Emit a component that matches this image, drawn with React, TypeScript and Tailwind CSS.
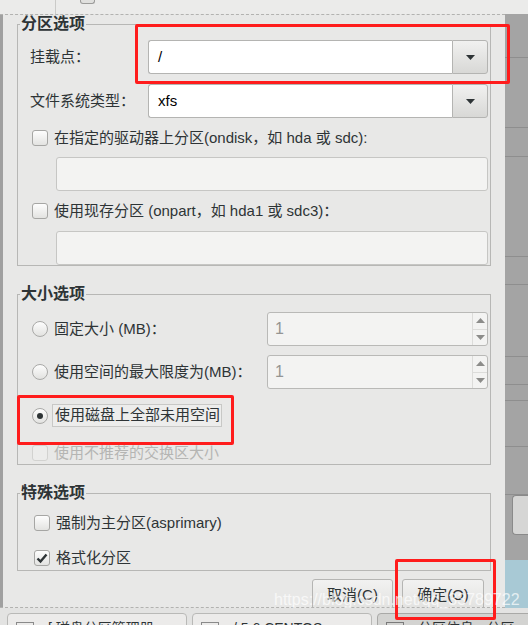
import React from 'react';

const Check = ({ checked = false, disabled = false }: { checked?: boolean; disabled?: boolean }) => (
  <div
    className={
      disabled
        ? 'flex h-[16px] w-[16px] shrink-0 items-center justify-center rounded-[3px] border border-[#d2d2d0] bg-[#ececeb]'
        : 'flex h-[16px] w-[16px] shrink-0 items-center justify-center rounded-[3px] border border-[#a6a6a4] bg-linear-to-b from-[#fdfdfd] to-[#e3e3e1]'
    }
  >
    {checked && (
      <svg width="14" height="14" viewBox="0 0 14 14">
        <path d="M2.5 7.5 L5.5 10.5 L11.5 3.5" fill="none" stroke="#2e3436" strokeWidth="2.4" />
      </svg>
    )}
  </div>
);

const Radio = ({ checked = false }: { checked?: boolean }) => (
  <div className="flex h-[16px] w-[16px] shrink-0 items-center justify-center rounded-full border border-[#a9a9a7] bg-linear-to-b from-[#fdfdfd] to-[#e2e2e0]">
    {checked && <div className="h-[6px] w-[6px] rounded-full bg-[#2e3436]" />}
  </div>
);

const Combo = ({ value }: { value: string }) => (
  <div className="flex h-[34px] flex-1">
    <div className="flex flex-1 items-center rounded-l-[3px] border border-r-0 border-[#b4b4b2] bg-white pl-[9px] text-black">
      {value}
    </div>
    <div className="flex w-[36px] items-center justify-center rounded-r-[3px] border border-[#b4b4b2] bg-linear-to-b from-[#f1f1f0] to-[#d8d8d6]">
      <svg width="9" height="5" viewBox="0 0 9 5">
        <path d="M0 0h9L4.5 5z" fill="#2e3436" />
      </svg>
    </div>
  </div>
);

const Spin = () => (
  <div className="ml-auto flex h-[34px] w-[221px] rounded-[3px] border border-[#b9b9b7] bg-[#f3f3f2]">
    <div className="flex flex-1 items-center pl-[7px] text-[16px] text-[#959593]">1</div>
    <div className="flex w-[15px] flex-col border-l border-[#dcdcda]">
      <div className="flex flex-1 items-center justify-center border-b border-[#dcdcda]">
        <svg width="9" height="5" viewBox="0 0 9 5">
          <path d="M0 5h9L4.5 0z" fill="#8c8c8a" />
        </svg>
      </div>
      <div className="flex flex-1 items-center justify-center">
        <svg width="9" height="5" viewBox="0 0 9 5">
          <path d="M0 0h9L4.5 5z" fill="#8c8c8a" />
        </svg>
      </div>
    </div>
  </div>
);

const Legend = ({ children }: { children: React.ReactNode }) => (
  <legend className="ml-[2px] px-[1px] text-[16px] font-bold leading-[18px] text-[#2e3436]">{children}</legend>
);

const rightBands = [44, 70, 29, 100, 28, 72, 28, 16, 46, 48];

export default function App() {
  return (
    <div className="relative flex h-[625px] w-[528px] flex-col overflow-hidden bg-[#e8e8e7] font-['Liberation_Sans','Noto_Sans_CJK_SC',sans-serif] text-[15px] text-[#2e3436]">
      {/* strip of the window behind, above the dialog */}
      <div className="flex h-[14px] shrink-0 bg-[#ebebea]">
        <div className="w-[56px] border-r border-[#cacac8]" />
        <div className="ml-[24px] h-[4px] w-[15px] rounded-b-[3px] border border-t-0 border-[#9c9c9a] bg-[#e0e0de]" />
      </div>

      <div className="flex h-[594px] shrink-0">
        {/* dialog */}
        <div className="flex w-[505px] overflow-hidden border-y border-dashed border-[#b2b2b0]">
          <div className="w-[3px] shrink-0 bg-[#a0a0a0]" />
          <div className="flex flex-1 flex-col">
            {/* 分区选项 */}
            <fieldset className="ml-[14px] w-[474px] min-w-0 border border-[#b7b7b5] p-0">
              <Legend>分区选项</Legend>
              <div className="flex flex-col pl-[12px] pr-[2px] pt-[7px]">
                <div className="flex h-[34px] items-center">
                  <span className="w-[118px]">挂载点：</span>
                  <Combo value="/" />
                </div>
                <div className="mt-[10px] flex h-[34px] items-center">
                  <span className="w-[118px]">文件系统类型：</span>
                  <Combo value="xfs" />
                </div>
                <div className="mt-[11px] flex h-[18px] items-center pl-[2px]">
                  <Check />
                  <span className="ml-[6px]">在指定的驱动器上分区(ondisk，如 hda 或 sdc):</span>
                </div>
                <div className="ml-[26px] mt-[10px] h-[34px] rounded-[3px] border border-[#c6c6c4] bg-[#f3f3f2]" />
                <div className="mt-[11px] flex h-[18px] items-center pl-[2px]">
                  <Check />
                  <span className="ml-[6px]">使用现存分区 (onpart，如 hda1 或 sdc3)：</span>
                </div>
                <div className="ml-[26px] mt-[11px] h-[34px] rounded-[3px] border border-[#c6c6c4] bg-[#f3f3f2]" />
              </div>
            </fieldset>

            {/* 大小选项 */}
            <fieldset className="ml-[14px] mt-[19px] w-[474px] min-w-0 border border-[#b7b7b5] p-0">
              <Legend>大小选项</Legend>
              <div className="flex flex-col pb-[3px] pl-[12px] pr-[2px] pt-[9px]">
                <div className="flex h-[34px] items-center pl-[2px]">
                  <Radio />
                  <span className="ml-[6px]">固定大小 (MB)：</span>
                  <Spin />
                </div>
                <div className="mt-[9px] flex h-[34px] items-center pl-[2px]">
                  <Radio />
                  <span className="ml-[6px]">使用空间的最大限度为(MB)：</span>
                  <Spin />
                </div>
                <div className="mt-[15px] flex h-[23px] items-center pl-[2px]">
                  <Radio checked />
                  <div className="ml-[4px] flex h-[23px] w-[170px] shrink-0 items-center whitespace-nowrap border border-[#c8c8c6] bg-[#ededec] pl-[2px]">
                    使用磁盘上全部未用空间
                  </div>
                </div>
                <div className="mt-[17px] flex h-[17px] items-start overflow-hidden pl-[2px]">
                  <div className="mt-[1px]">
                    <Check disabled />
                  </div>
                  <span className="ml-[6px] leading-[18px] text-[#b5b5b3]">使用不推荐的交换区大小</span>
                </div>
              </div>
            </fieldset>

            {/* 特殊选项 */}
            <fieldset className="ml-[14px] mt-[19px] w-[474px] min-w-0 border border-[#b7b7b5] p-0">
              <Legend>特殊选项</Legend>
              <div className="flex flex-col pb-[3px] pl-[16px] pt-[12px]">
                <div className="flex h-[18px] items-center">
                  <Check />
                  <span className="ml-[6px]">强制为主分区(asprimary)</span>
                </div>
                <div className="mt-[17px] flex h-[18px] items-center">
                  <Check checked />
                  <span className="ml-[6px]">格式化分区</span>
                </div>
              </div>
            </fieldset>

            <div className="mt-[8px] flex justify-end gap-[9px] pr-[21px]">
              <button className="h-[32px] w-[81px] shrink-0 rounded-[3px] border border-[#b5b5b3] bg-linear-to-b from-[#f2f2f1] to-[#e1e1df] text-[#2e3436]">
                取消(C)
              </button>
              <button className="h-[32px] w-[82px] shrink-0 rounded-[3px] border border-[#b5b5b3] bg-linear-to-b from-[#f2f2f1] to-[#e1e1df] text-[#2e3436]">
                确定(O)
              </button>
            </div>
          </div>
        </div>

        {/* desktop behind, right of the dialog */}
        <div className="flex w-[23px] flex-col bg-[#a4a4a4]">
          {rightBands.map((h, i) => (
            <div key={i} className="shrink-0 border-b border-[#8e8e8e]" style={{ height: h }} />
          ))}
          <div className="ml-[7px] h-[40px] shrink-0 rounded-l-[4px] border border-r-0 border-[#8a8a8a] bg-[#d6d6d5]" />
          <div className="h-[25px] shrink-0" />
          <div className="flex-1 bg-[#a8c9d5]" />
        </div>
      </div>

      {/* taskbar */}
      <div className="flex h-[17px] shrink-0 gap-[5px] bg-[#e3e3e2] pl-[7px] pt-[5px]">
        <div className="flex h-[20px] w-[180px] shrink-0 items-start gap-[14px] rounded-t-[4px] border border-[#b9b9b7] bg-[#ecebea] pl-[8px] pt-[6px] text-[14px] leading-[16px]">
          <div className="mt-[2px] h-[6px] w-[18px] border border-[#8a8a8a]" />
          <span>[ 磁盘分区管理器</span>
        </div>
        <div className="flex h-[20px] w-[180px] shrink-0 items-start gap-[14px] rounded-t-[4px] border border-[#b9b9b7] bg-[#ecebea] pl-[8px] pt-[6px] text-[14px] leading-[16px]">
          <div className="mt-[2px] h-[6px] w-[18px] border border-[#8a8a8a]" />
          <span>/ 5 6 CENTOS</span>
        </div>
        <div className="flex h-[20px] w-[180px] shrink-0 items-start gap-[14px] rounded-t-[4px] border border-[#a9a9a7] bg-[#d3d3d1] pl-[8px] pt-[6px] text-[14px] leading-[16px]">
          <div className="mt-[2px] h-[6px] w-[18px] border border-[#7a7a7a]" />
          <span>分区信息 - 分区</span>
        </div>
      </div>

      {/* annotations */}
      <div className="absolute left-[135px] top-[24px] h-[60px] w-[375px] rounded-[2px] border-[3px] border-[#ff1c1c]" />
      <div className="absolute left-[17px] top-[395px] h-[50px] w-[217px] rounded-[2px] border-[3px] border-[#ff1c1c]" />
      <div className="absolute left-[395px] top-[559px] h-[61px] w-[101px] rounded-[2px] border-[3px] border-[#ff1c1c]" />
      <div className="absolute left-[274px] top-[592px] text-[16px] leading-[16px] text-white/70">
        https://blog.csdn.net/qq_33789722
      </div>
    </div>
  );
}
